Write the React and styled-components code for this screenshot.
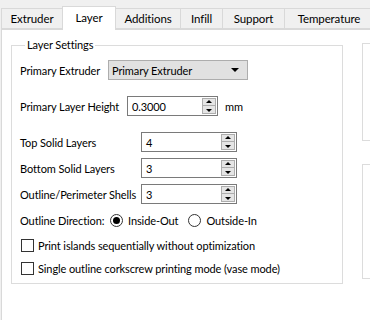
import styled, { createGlobalStyle } from "styled-components";

const GlobalStyle = createGlobalStyle`
  html, body {
    margin: 0;
    padding: 0;
    background: #f0f0f0;
  }
  * {
    box-sizing: border-box;
  }
`;

const tabs = ["Extruder", "Layer", "Additions", "Infill", "Support", "Temperature"];
const tabWidths = [62, 54, 66, 43, 63, 90];

function SpinBox({ value, width }) {
  return (
    <SpinField $width={width}>
      <span>{value}</span>
      <SpinButtons>
        <Arrow $up />
        <SpinDivider />
        <Arrow />
      </SpinButtons>
    </SpinField>
  );
}

function Radio({ checked, children }) {
  return (
    <RadioLabel>
      <RadioDot $checked={checked} />
      {children}
    </RadioLabel>
  );
}

function Check({ children }) {
  return (
    <CheckRow>
      <CheckBox />
      {children}
    </CheckRow>
  );
}

export default function App() {
  return (
    <>
      <GlobalStyle />
      <Window>
        <TabBar>
          {tabs.map((t, i) => (
            <Tab key={t} $active={t === "Layer"} $width={tabWidths[i]}>
              {t}
            </Tab>
          ))}
        </TabBar>
        <Pane>
          <GroupBox>
            <legend>Layer Settings</legend>
            <Row $top={7}>
              <Label $width={88}>Primary Extruder</Label>
              <Combo>
                <span>Primary Extruder</span>
                <DropArrow />
              </Combo>
            </Row>
            <Row $top={16}>
              <Label $width={107}>Primary Layer Height</Label>
              <SpinBox value="0.3000" width={91} />
              <Unit>mm</Unit>
            </Row>
            <SpinGrid>
              <Label>Top Solid Layers</Label>
              <SpinBox value="4" width={96} />
              <Label>Bottom Solid Layers</Label>
              <SpinBox value="3" width={96} />
              <Label>Outline/Perimeter Shells</Label>
              <SpinBox value="3" width={96} />
            </SpinGrid>
            <Row $top={6}>
              <Label $width={90}>Outline Direction:</Label>
              <RadioGroup>
                <Radio checked>Inside-Out</Radio>
                <Radio>Outside-In</Radio>
              </RadioGroup>
            </Row>
            <Checks>
              <Check>Print islands sequentially without optimization</Check>
              <Check>Single outline corkscrew printing mode (vase mode)</Check>
            </Checks>
          </GroupBox>
          <SideColumn>
            <SideBox $height={98} />
            <SideBox $height={115} />
          </SideColumn>
        </Pane>
      </Window>
    </>
  );
}

const Window = styled.div`
  width: 370px;
  height: 320px;
  overflow: hidden;
  background: #f0f0f0;
  font-family: Lato, "Segoe UI", sans-serif;
  font-size: 11px;
  letter-spacing: -0.1px;
  color: #000000;
  display: flex;
  flex-direction: column;
`;

const TabBar = styled.div`
  height: 29px;
  display: flex;
  align-items: flex-end;
  padding-left: 2px;
  flex-shrink: 0;
  position: relative;
  z-index: 1;
`;

const Tab = styled.div`
  flex-shrink: 0;
  width: ${(p) => p.$width}px;
  height: ${(p) => (p.$active ? 24 : 21)}px;
  margin-bottom: ${(p) => (p.$active ? -1 : 0)}px;
  margin-left: -1px;
  border: 1px solid #d9d9d9;
  border-bottom: ${(p) => (p.$active ? "none" : "1px solid #d9d9d9")};
  background: ${(p) => (p.$active ? "#ffffff" : "#f0f0f0")};
  display: flex;
  align-items: center;
  justify-content: center;
  padding-bottom: ${(p) => (p.$active ? 3 : 1)}px;
  font-size: 11.5px;
  position: relative;
  z-index: ${(p) => (p.$active ? 2 : 1)};
`;

const Pane = styled.div`
  flex: 1;
  margin-left: 1px;
  background: #ffffff;
  border-top: 1px solid #d9d9d9;
  border-left: 1px solid #d9d9d9;
  display: flex;
  align-items: flex-start;
  gap: 19px;
  padding-left: 9px;
`;

const GroupBox = styled.fieldset`
  flex-shrink: 0;
  width: 332px;
  height: 247px;
  margin: 7px 0 0 0;
  padding: 0 8px;
  border: 1px solid #dcdcdc;
  display: flex;
  flex-direction: column;
  min-width: 0;

  legend {
    margin-left: 5px;
    padding: 0 2px;
    line-height: 16px;
  }
`;

const Row = styled.div`
  display: flex;
  align-items: center;
  margin-top: ${(p) => p.$top}px;
  height: 20px;
`;

const Label = styled.span`
  white-space: nowrap;
  flex-shrink: 0;
  width: ${(p) => (p.$width ? `${p.$width}px` : "auto")};
`;

const Combo = styled.div`
  width: 140px;
  height: 20px;
  background: #e1e1e1;
  border: 1px solid #adadad;
  display: flex;
  align-items: center;
  justify-content: space-between;
  padding: 0 8px 0 3px;
`;

const DropArrow = styled.span`
  width: 0;
  height: 0;
  border-left: 4px solid transparent;
  border-right: 4px solid transparent;
  border-top: 4px solid #000000;
`;

const SpinField = styled.div`
  width: ${(p) => p.$width}px;
  height: 20px;
  border: 1px solid #7a7a7a;
  background: #ffffff;
  display: flex;
  align-items: center;
  justify-content: space-between;
  padding: 0 1px 0 4px;
`;

const SpinButtons = styled.div`
  width: 14px;
  height: 16px;
  border: 1px solid #adadad;
  background: #e5e5e5;
  display: flex;
  flex-direction: column;
  align-items: center;
  justify-content: space-around;
`;

const SpinDivider = styled.div`
  width: 100%;
  height: 1px;
  background: #adadad;
`;

const Arrow = styled.span`
  width: 0;
  height: 0;
  border-left: 3px solid transparent;
  border-right: 3px solid transparent;
  ${(p) =>
    p.$up ? "border-bottom: 3px solid #000000;" : "border-top: 3px solid #000000;"}
`;

const Unit = styled.span`
  margin-left: 7px;
`;

const SpinGrid = styled.div`
  display: grid;
  grid-template-columns: 121px 96px;
  grid-auto-rows: 20px;
  row-gap: 6px;
  align-items: center;
  margin-top: 16px;
`;

const RadioGroup = styled.div`
  display: flex;
  gap: 10px;
`;

const RadioLabel = styled.span`
  display: flex;
  align-items: center;
  gap: 5px;
`;

const RadioDot = styled.span`
  width: 13px;
  height: 13px;
  border-radius: 50%;
  border: 1px solid #333333;
  background: #ffffff;
  display: flex;
  align-items: center;
  justify-content: center;

  &::after {
    content: "";
    width: 7px;
    height: 7px;
    border-radius: 50%;
    background: ${(p) => (p.$checked ? "#000000" : "transparent")};
  }
`;

const Checks = styled.div`
  display: flex;
  flex-direction: column;
  gap: 7px;
  margin-top: 7px;
  padding-left: 1px;
`;

const CheckRow = styled.div`
  display: flex;
  align-items: center;
  gap: 4px;
  height: 16px;
`;

const CheckBox = styled.span`
  width: 13px;
  height: 13px;
  border: 1px solid #333333;
  background: #ffffff;
`;

const SideColumn = styled.div`
  display: flex;
  flex-direction: column;
  gap: 23px;
  margin-top: 13px;
`;

const SideBox = styled.div`
  width: 100px;
  height: ${(p) => p.$height}px;
  border: 1px solid #dcdcdc;
`;
